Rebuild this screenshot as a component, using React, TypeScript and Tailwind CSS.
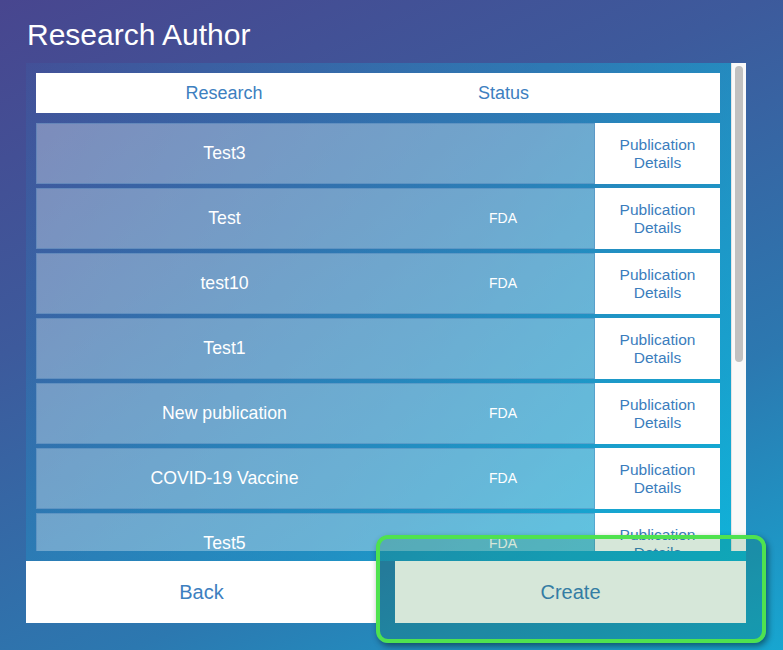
import React from "react";

const rows = [
  { name: "Test3", status: "" },
  { name: "Test", status: "FDA" },
  { name: "test10", status: "FDA" },
  { name: "Test1", status: "" },
  { name: "New publication", status: "FDA" },
  { name: "COVID-19 Vaccine", status: "FDA" },
  { name: "Test5", status: "FDA" },
];

export default function App() {
  return (
    <div className="relative w-[783px] h-[650px] overflow-hidden bg-[linear-gradient(155deg,#48468f_0%,#3d5a9c_35%,#2c78b0_70%,#17a6d0_100%)] font-['Liberation_Sans',Arial,sans-serif]">
      <h1 className="h-[63px] pl-[27px] pt-[20px] text-[30px] leading-[30px] text-white">
        Research Author
      </h1>
      <div className="ml-[26px] w-[720px] h-[498px] bg-[linear-gradient(120deg,rgba(40,130,200,0.1),rgba(20,175,220,0.4)_55%,rgba(10,190,225,0.7))]">
        <div className="flex">
          <div className="w-[705px] h-[488px] overflow-hidden pt-[10px] pl-[10px] pr-[11px]">
            <div className="flex h-[40px] bg-white items-center text-[18px] text-[#3d80c0]">
              <div className="w-[376px] text-center">Research</div>
              <div className="w-[183px] text-center">Status</div>
              <div className="flex-1" />
            </div>
            <div className="mt-[10px] flex flex-col gap-[4px]">
              {rows.map((r) => (
                <div key={r.name} className="flex h-[61px] shrink-0">
                  <div className="flex w-[559px] items-center bg-white/[0.32] border border-[rgba(60,120,180,0.35)]">
                    <div className="w-[375px] text-center text-[17.7px] text-white">{r.name}</div>
                    <div className="flex-1 text-center text-[14px] text-white">{r.status}</div>
                  </div>
                  <div className="flex w-[125px] items-center justify-center bg-white text-center text-[15.5px] leading-[18px] text-[#3b7dbd]">
                    Publication
                    <br />
                    Details
                  </div>
                </div>
              ))}
            </div>
          </div>
          <div className="w-[15px] h-[488px] bg-[#f9f9f9] border-l border-[#e4e4e4] pt-[3px] flex justify-center">
            <div className="w-[8px] h-[296px] rounded-full bg-[#c1c1c1]" />
          </div>
        </div>
      </div>
      <div className="ml-[26px] flex w-[720px] h-[62px] gap-[18px]">
        <div className="flex flex-1 items-center justify-center bg-white text-[20px] text-[#3d80c0]">Back</div>
        <div className="flex flex-1 items-center justify-center bg-white text-[20px] text-[#3d80c0]">Create</div>
      </div>
      <div className="absolute left-[376px] top-[535px] w-[390px] h-[108px] rounded-[12px] border-[4px] border-[#4fe24f] bg-[rgba(10,110,30,0.17)] shadow-[2px_3px_6px_rgba(0,0,0,0.45)]" />
    </div>
  );
}
